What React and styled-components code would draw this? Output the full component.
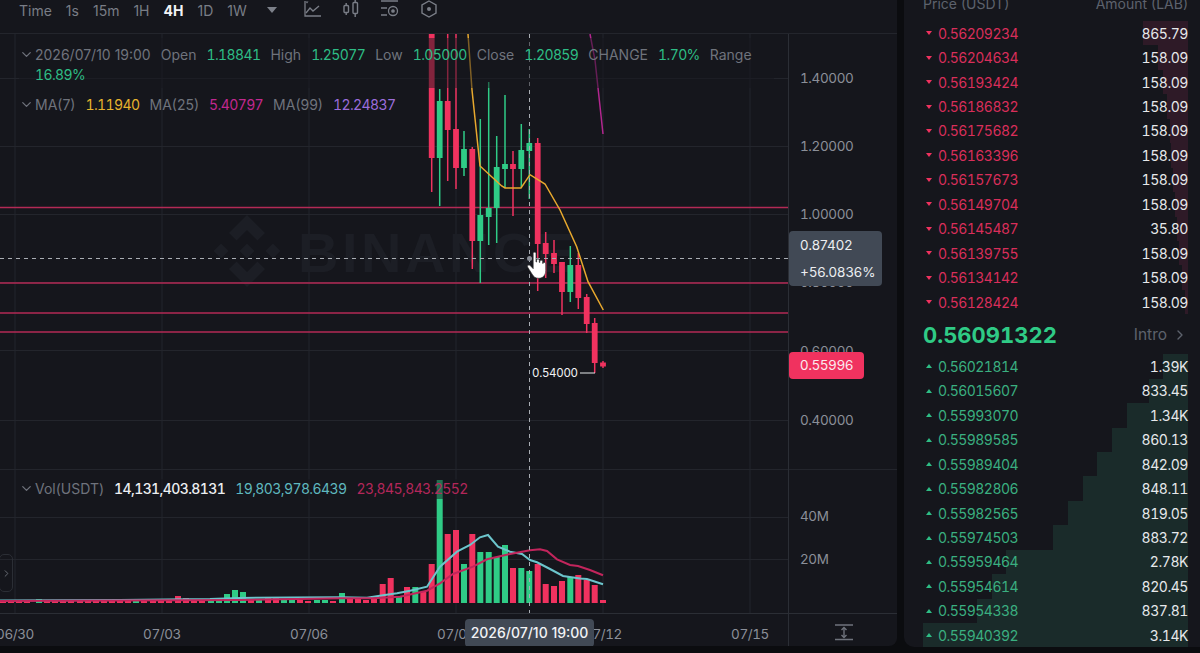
import React from 'react';
import styled, { createGlobalStyle } from 'styled-components';
import { ChevronDown, ChevronRight } from 'lucide-react';

const GREEN = '#2ebd85';
const CANDLE_GREEN = '#2fcb86';
const RED = '#f0325f';
const PANEL = '#15161c';
const GRID = '#23252c';
const AXIS_TEXT = '#8b8f98';

const GlobalStyle = createGlobalStyle`
  html, body { margin: 0; padding: 0; background: #0b0c0f; }
  body { font-family: Inter, "Liberation Sans", sans-serif; }
`;

// [x, bodyTop, bodyBottom, wickTop, wickBottom, up]
const candles = [
  [431.7, 34, 158, 34, 192, 0],
  [439.7, 101, 158, 89, 206, 1],
  [447.7, 101, 130, 34, 181, 0],
  [456, 129, 168, 34, 189, 0],
  [464, 149, 168, 131, 176, 1],
  [472.3, 149, 241, 147, 269, 0],
  [480.3, 215, 241, 119, 283, 1],
  [488.7, 208, 217, 82, 245, 1],
  [496.7, 167, 208, 136, 243, 1],
  [505, 164, 169, 95, 188, 1],
  [513, 164, 169, 151, 216, 0],
  [521.3, 150, 169, 124, 187, 1],
  [529.3, 143, 151, 129, 199, 1],
  [537.7, 143, 244, 138, 291, 0],
  [545.7, 243, 254, 232, 278, 0],
  [554, 253, 264, 240, 273, 0],
  [562, 262, 292, 262, 315, 0],
  [570.3, 265, 292, 246, 302, 1],
  [578.3, 265, 298, 253, 309, 0],
  [586.7, 297, 324, 294, 333, 0],
  [594.7, 323, 363, 318, 373, 0],
  [603, 362.5, 366.5, 361, 368, 0],
];

// volume bars from 07/07 onward: [x, top, up]
const volBars = [
  [342, 593, 1], [350, 599, 0], [358, 599, 0], [366, 600, 0], [374, 599, 0],
  [382.7, 584, 0], [390.7, 578, 0], [399, 597, 1], [407, 587, 0], [415.3, 587, 1],
  [423.3, 592, 0], [431.7, 564, 0], [439.7, 480, 1], [447.7, 534, 0], [456, 530, 0],
  [464, 564, 1], [472.3, 534, 0], [480.3, 552, 1], [488.7, 552, 1], [496.7, 557, 1],
  [505, 545, 1], [513, 568, 0], [521.3, 568, 1], [529.3, 571, 1], [537.7, 564, 0],
  [545.7, 584, 0], [554, 586, 0], [562, 581, 0], [570.3, 577, 1], [578.3, 575, 0],
  [586.7, 580, 0], [594.7, 585, 0], [603, 600, 0],
];

// flat stretch before the pump, heights in px
const flatBars = [
  [3, 0, 2], [11, 0, 2], [19, 0, 3], [27, 0, 2], [39, 1, 4], [47, 0, 2], [55, 0, 3], [63, 0, 2],
  [71, 0, 2], [80, 0, 3], [88, 0, 2], [96, 0, 2], [104, 0, 3], [112, 0, 2], [120, 0, 2],
  [128, 0, 2], [136, 1, 2], [144, 0, 2], [153, 0, 2], [161, 0, 2], [169, 0, 2], [178, 0, 7],
  [186, 0, 5], [194, 0, 4], [202, 0, 3], [211, 1, 3], [219, 1, 4], [227, 1, 9], [235, 1, 13],
  [243, 1, 11], [251, 0, 4], [259, 1, 4], [268, 0, 5], [276, 0, 5], [284, 1, 4], [292, 1, 4],
  [300, 0, 3], [308, 0, 2], [317, 1, 3], [325, 1, 3], [333, 0, 2],
];

const tealLine = 'M0,600.5 L120,600 L210,599 L240,598 L290,597.5 L340,597.3 L367,597.7 L383,595.3 L397,593.3 L410,590.7 L427,586.7 L440,566.7 L457,551.7 L470,545 L480,537.3 L488,535 L498,546.7 L510,551.7 L522,554 L530,560 L537,562.3 L550,569 L563,576 L580,578.5 L587,579 L603,584.3';
const crimsonLine = 'M0,601 L240,600 L340,598.3 L373,598.3 L400,596.7 L427,590.7 L440,583.3 L453,574 L473,566.7 L487,559.3 L510,554 L530,550.3 L540,549.3 L547,551 L557,559.3 L570,565 L578,566 L590,570 L603,575.3';
const ma7Line = 'M468,34 L472,90 L480,166 L501.7,186 L505,188 L521,188 L530,174.7 L545,184 L560,210 L576.7,246.7 L588,281.7 L603.3,310';

const asks = [
  ['0.56209234', '865.79', 45], ['0.56204634', '158.09', 30], ['0.56193424', '158.09', 25],
  ['0.56186832', '158.09', 21], ['0.56175682', '158.09', 18], ['0.56163396', '158.09', 17],
  ['0.56157673', '158.09', 15], ['0.56149704', '158.09', 13], ['0.56145487', '35.80', 11],
  ['0.56139755', '158.09', 9], ['0.56134142', '158.09', 6], ['0.56128424', '158.09', 3],
];
const bids = [
  ['0.56021814', '1.39K', 25], ['0.56015607', '833.45', 39], ['0.55993070', '1.34K', 61],
  ['0.55989585', '860.13', 76], ['0.55989404', '842.09', 91], ['0.55982806', '848.11', 105],
  ['0.55982565', '819.05', 120], ['0.55974503', '883.72', 135], ['0.55959464', '2.78K', 182],
  ['0.55954614', '820.45', 196], ['0.55954338', '837.81', 211], ['0.55940392', '3.14K', 265],
];

const intervals = ['1s', '15m', '1H', '4H', '1D', '1W'];

const Page = styled.div`
  display: flex;
  gap: 7px;
  width: 1200px;
  height: 653px;
  overflow: hidden;
  background: #0b0c0f;
`;

const ChartPanel = styled.section`
  width: 897px;
  height: 646px;
  flex: none;
  display: flex;
  flex-direction: column;
  background: ${PANEL};
  border-bottom-right-radius: 8px;
  overflow: hidden;
`;

const Toolbar = styled.div`
  height: 34px;
  box-sizing: border-box;
  flex: none;
  display: flex;
  align-items: flex-start;
  gap: 14px;
  padding: 2px 0 0 19px;
  border-bottom: 1px solid ${GRID};
  font-size: 14px;
  line-height: 17px;
  color: #797d86;
`;

const Interval = styled.span`
  color: ${p => (p.$active ? '#f2f3f5' : '#797d86')};
  font-weight: ${p => (p.$active ? 700 : 400)};
`;

const Caret = styled.span`
  width: 0;
  height: 0;
  margin: 5px 0 0 6px;
  border-left: 5px solid transparent;
  border-right: 5px solid transparent;
  border-top: 6px solid #7d818a;
`;

const ToolIcons = styled.div`
  display: flex;
  gap: 19px;
  margin: -3px 0 0 11px;
  color: #7a7e87;
`;

const ChartArea = styled.div`
  position: relative;
  flex: 1;
  min-height: 0;
`;

const ChartSvg = styled.svg`
  display: block;
  font-family: Inter, "Liberation Sans", sans-serif;
  font-variant-numeric: tabular-nums;
`;

const Legend = styled.div`
  position: absolute;
  left: 19px;
  top: ${p => p.$top}px;
  width: ${p => p.$width}px;
  display: flex;
  align-items: flex-start;
  gap: 1px;
  padding: ${p => p.$pad};
  font-size: 14px;
  line-height: 20px;
  color: #6f737c;
  background: ${p => (p.$dim ? 'rgba(21, 22, 28, 0.5)' : 'transparent')};
`;

const LegendItems = styled.div`
  flex: 1;
  display: flex;
  flex-wrap: wrap;
  column-gap: 10px;
`;

const Value = styled.span`
  color: ${p => p.$color};
  font-weight: ${p => (p.$bold ? 500 : 400)};
  font-variant-numeric: tabular-nums;
  letter-spacing: -0.6px;
`;

const ExpandHandle = styled.div`
  position: absolute;
  left: -1px;
  top: 520px;
  width: 14px;
  height: 38px;
  box-sizing: border-box;
  display: flex;
  align-items: center;
  justify-content: center;
  border: 1px solid #2b2e35;
  border-radius: 5px;
  color: #6f737c;
`;

const CrossPriceTag = styled.div`
  position: absolute;
  left: 789px;
  top: 197px;
  width: 93px;
  height: 55px;
  box-sizing: border-box;
  display: flex;
  flex-direction: column;
  justify-content: space-between;
  padding: 6px 0 5px 11px;
  border-radius: 4px;
  background: #414955;
  color: #eceef1;
  font-size: 13.5px;
  line-height: 17px;
`;

const LastPriceTag = styled.div`
  position: absolute;
  left: 789px;
  top: 318px;
  width: 75px;
  height: 27px;
  box-sizing: border-box;
  padding-left: 11px;
  border-radius: 4px;
  background: ${RED};
  color: #fbe9ee;
  font-size: 13.5px;
  line-height: 27px;
`;

const TimeTag = styled.div`
  position: absolute;
  left: 465px;
  top: 585px;
  width: 129px;
  height: 28px;
  border-radius: 4px;
  background: #414955;
  color: #f2f3f5;
  font-size: 14px;
  font-weight: 500;
  line-height: 28px;
  text-align: center;
`;

const Cursor = styled.svg`
  position: absolute;
  left: 525px;
  top: 216px;
`;

const Book = styled.section`
  width: 296px;
  height: 647px;
  flex: none;
  box-sizing: border-box;
  padding: 0 12px 0 19px;
  background: ${PANEL};
  border-bottom-left-radius: 10px;
  overflow: hidden;
`;

const BookHeader = styled.div`
  height: 25px;
  margin-top: -4px;
  display: flex;
  justify-content: space-between;
  font-size: 14px;
  line-height: 16px;
  color: #5d626d;
`;

const Row = styled.div`
  position: relative;
  height: 24.45px;
  display: flex;
  align-items: center;
  justify-content: space-between;
  font-size: 14px;
  font-variant-numeric: tabular-nums;
`;

const DepthBar = styled.div`
  position: absolute;
  right: 0;
  top: 0;
  bottom: 0;
  background: ${p => (p.$side === 'ask' ? '#2e1a27' : '#1a2b2a')};
`;

const Price = styled.span`
  position: relative;
  display: flex;
  align-items: center;
  gap: 5px;
  padding-left: 3px;
  letter-spacing: -0.55px;
  color: ${p => (p.$side === 'ask' ? '#d92e5a' : '#3aaf80')};
`;

const Arrow = styled.i`
  width: 0;
  height: 0;
  margin-right: 1px;
  border-left: 3.5px solid transparent;
  border-right: 3.5px solid transparent;
  border-top: ${p => (p.$side === 'ask' ? `4px solid ${RED}` : 'none')};
  border-bottom: ${p => (p.$side === 'bid' ? `4px solid ${GREEN}` : 'none')};
`;

const Amount = styled.span`
  position: relative;
  letter-spacing: -0.45px;
  color: #e6e8ea;
`;

const MidRow = styled.div`
  height: 40px;
  padding-top: 1px;
  box-sizing: border-box;
  display: flex;
  align-items: center;
  justify-content: space-between;
`;

const MidPrice = styled.span`
  font-size: 22px;
  font-weight: 700;
  font-variant-numeric: tabular-nums;
  color: ${CANDLE_GREEN};
`;

const Intro = styled.span`
  display: flex;
  align-items: center;
  gap: 3px;
  font-size: 15.5px;
  color: #5d626d;
`;

const LineChartIcon = () => (
  <svg width="20" height="20" viewBox="0 0 20 20" fill="none" stroke="currentColor" strokeWidth="1.3">
    <path d="M3 2v15h16" />
    <path d="M4 14l4-5 3 3 6-5" />
    <path d="M3.5 2.500h3l-1.500 2z" fill="currentColor" stroke="none" />
  </svg>
);

const CandlesIcon = () => (
  <svg width="20" height="20" viewBox="0 0 20 20" fill="none" stroke="currentColor" strokeWidth="1.4">
    <rect x="3" y="6.500" width="4.500" height="7" rx="1" />
    <path d="M5.200 4v2.500M5.200 13.500V16" />
    <rect x="12" y="3.500" width="4.500" height="11" rx="1" />
    <path d="M14.200 1v2.500M14.200 14.500V18" />
  </svg>
);

const IndicatorIcon = () => (
  <svg width="20" height="20" viewBox="0 0 20 20" fill="none" stroke="currentColor" strokeWidth="1.3">
    <path d="M1 2h17M1 9h6M1 16h6" />
    <circle cx="13" cy="12" r="4.500" />
    <circle cx="13" cy="12" r="1.200" fill="currentColor" />
  </svg>
);

const HexIcon = () => (
  <svg width="20" height="20" viewBox="0 0 20 20" fill="none" stroke="currentColor" strokeWidth="1.4">
    <path d="M10 2l7 4v8l-7 4-7-4V6z" />
    <circle cx="10" cy="10" r="2" fill="currentColor" stroke="none" />
  </svg>
);

const HandCursor = () => (
  <Cursor width="26" height="32" viewBox="0 0 24 30">
    <path
      d="M7.500 3.200c0-1.600 2.600-1.600 2.600 0v8l.6.1V9.600c0-1.500 2.500-1.500 2.500 0v2l.6.1v-1c0-1.500 2.500-1.500 2.500 0v1.800l.5.1c.2-1.300 2.400-1.300 2.400.3v6.600c0 3.800-2.400 7-6.300 7-3.400 0-5-1.400-6.500-4L2.300 16c-.8-1.400 1.100-2.700 2.300-1.500l2.900 3z"
      fill="#fff"
      stroke="#333"
      strokeWidth="0.6"
    />
  </Cursor>
);

const Watermark = () => (
  <g fill="#1c1e25">
    <g transform="translate(247 251) scale(36)">
      <path d="M0-1L.5-.5.29-.29 0-.58-.29-.29-.5-.5z" />
      <path d="M0 1L.5.5.29.29 0 .58-.29.29-.5.5z" />
      <path d="M0-.21L.21 0 0 .21-.21 0z" />
      <path d="M-.72-.21L-.51 0-.72.21-.93 0z" />
      <path d="M.72-.21L.93 0 .72.21.51 0z" />
    </g>
    <text x="298" y="272" fontSize="56" fontWeight="700" fontFamily="Liberation Sans, sans-serif" letterSpacing="3.500">BINANCE</text>
  </g>
);

const priceLabels = [
  ['1.40000', 78], ['1.20000', 146], ['1.00000', 214], ['0.80000', 282], ['0.60000', 351], ['0.40000', 420],
];
const dateLabels = [['06/30', 15], ['07/03', 162], ['07/06', 309], ['07/09', 456], ['07/12', 603], ['07/15', 750]];

const Chart = () => (
  <ChartSvg width="897" height="612" viewBox="0 34 897 612">
    {[15, 162, 309, 456, 603, 750].map(x => (
      <line key={x} x1={x} x2={x} y1="34" y2="613" stroke={GRID} />
    ))}
    {[78, 146, 214, 282, 350, 420, 517, 559].map(y => (
      <line key={y} x1="0" x2="788" y1={y + 0.5} y2={y + 0.5} stroke={GRID} />
    ))}
    <Watermark />
    <line x1="0" x2="897" y1="469.500" y2="469.500" stroke={GRID} />
    <line x1="0" x2="897" y1="613.500" y2="613.500" stroke="#2b2e35" />
    <line x1="788.500" x2="788.500" y1="34" y2="646" stroke="#2b2e35" />

    {[207.5, 283, 313, 332].map(y => (
      <line key={y} x1="0" x2="788" y1={y} y2={y} stroke="#b32a55" strokeWidth="1.5" />
    ))}

    {candles.map(([x, top, bottom, wickTop, wickBottom, up]) => (
      <g key={x} fill={up ? CANDLE_GREEN : RED}>
        <rect x={x - 0.75} y={wickTop} width="1.5" height={wickBottom - wickTop} />
        <rect x={x - 2.9} y={top} width="5.8" height={bottom - top} />
      </g>
    ))}
    <path d={ma7Line} fill="none" stroke="#e8a92e" strokeWidth="1.5" />
    <path d="M590,34 L595,60 L603,134" fill="none" stroke="#b3268f" strokeWidth="1.5" />

    {flatBars.map(([x, up, h]) => (
      <rect key={x} x={x - 3} y={603 - h} width="6" height={h} fill={up ? CANDLE_GREEN : RED} />
    ))}
    {volBars.map(([x, top, up]) => (
      <rect key={x} x={x - 3} y={top} width="6" height={603 - top} fill={up ? CANDLE_GREEN : RED} />
    ))}
    <path d={tealLine} fill="none" stroke="#6cc5cc" strokeWidth="2" />
    <path d={crimsonLine} fill="none" stroke="#c2255c" strokeWidth="2" />

    <line x1="0" x2="788" y1="258.500" y2="258.500" stroke="#a9adb3" strokeDasharray="4 4" />
    <line x1="529.500" x2="529.500" y1="34" y2="613" stroke="#a9adb3" strokeDasharray="4 4" />
    <circle cx="529.500" cy="258.500" r="2.500" fill="#8b8f98" />

    <text x="532" y="377" fontSize="11.500" letterSpacing="-0.3" fill="#f2f3f5">0.54000</text>
    <line x1="580" x2="595" y1="373" y2="373" stroke="#e6e8ea" />

    <g fontSize="13.500" letterSpacing="-0.4" fill={AXIS_TEXT}>
      {priceLabels.map(([label, y]) => (
        <text key={label} x="800" y={y + 5}>{label}</text>
      ))}
      <text x="800" y="521">40M</text>
      <text x="800" y="564">20M</text>
      {dateLabels.map(([label, x]) => (
        <text key={label} x={x} y="639" textAnchor="middle">{label}</text>
      ))}
    </g>

    <g stroke="#6f737c" strokeWidth="1.400" fill="none">
      <path d="M835 625h18M835 639.500h18M844 628v9" />
      <path d="M841.500 630l2.500-2.500 2.500 2.500M841.500 635l2.500 2.500 2.500-2.500" />
    </g>
  </ChartSvg>
);

const BookRow = ({ side, price, amount, depth }) => (
  <Row>
    <DepthBar $side={side} style={{ width: depth }} />
    <Price $side={side}>
      <Arrow $side={side} />
      {price}
    </Price>
    <Amount>{amount}</Amount>
  </Row>
);

export default function App() {
  return (
    <Page>
      <GlobalStyle />
      <ChartPanel>
        <Toolbar>
          <span>Time</span>
          {intervals.map(i => (
            <Interval key={i} $active={i === '4H'}>{i}</Interval>
          ))}
          <Caret />
          <ToolIcons>
            <LineChartIcon />
            <CandlesIcon />
            <IndicatorIcon />
            <HexIcon />
          </ToolIcons>
        </Toolbar>
        <ChartArea>
          <Chart />
          <Legend $top={4} $width={755} $pad="7px 0 3px" $dim>
            <ChevronDown size={15} style={{ marginTop: 2 }} />
            <LegendItems>
              <span>2026/07/10 19:00</span>
              <span>Open</span><Value $color={GREEN}>1.18841</Value>
              <span>High</span><Value $color={GREEN}>1.25077</Value>
              <span>Low</span><Value $color={GREEN}>1.05000</Value>
              <span>Close</span><Value $color={GREEN}>1.20859</Value>
              <span>CHANGE</span><Value $color={GREEN}>1.70%</Value>
              <span>Range</span><Value $color={GREEN}>16.89%</Value>
            </LegendItems>
          </Legend>
          <Legend $top={61} $width={420} $pad="0">
            <ChevronDown size={15} style={{ marginTop: 2 }} />
            <LegendItems>
              <span>MA(7)</span><Value $color="#e6b32e">1.11940</Value>
              <span>MA(25)</span><Value $color="#c1288f">5.40797</Value>
              <span>MA(99)</span><Value $color="#9b6ddb">12.24837</Value>
            </LegendItems>
          </Legend>
          <Legend $top={445} $width={480} $pad="0" $dim>
            <ChevronDown size={15} style={{ marginTop: 2 }} />
            <LegendItems>
              <span>Vol(USDT)</span>
              <Value $color="#eceef1" $bold>14,131,403.8131</Value>
              <Value $color="#5fb8bf">19,803,978.6439</Value>
              <Value $color="#b3275a">23,845,843.2552</Value>
            </LegendItems>
          </Legend>
          <ExpandHandle><ChevronRight size={11} /></ExpandHandle>
          <CrossPriceTag>
            <span>0.87402</span>
            <span>+56.0836%</span>
          </CrossPriceTag>
          <LastPriceTag>0.55996</LastPriceTag>
          <TimeTag>2026/07/10 19:00</TimeTag>
          <HandCursor />
        </ChartArea>
      </ChartPanel>
      <Book>
        <BookHeader>
          <span>Price (USDT)</span>
          <span>Amount (LAB)</span>
        </BookHeader>
        {asks.map(([price, amount, depth]) => (
          <BookRow key={price} side="ask" price={price} amount={amount} depth={depth} />
        ))}
        <MidRow>
          <MidPrice>0.56091322</MidPrice>
          <Intro>Intro <ChevronRight size={16} style={{ marginLeft: 2 }} /></Intro>
        </MidRow>
        {bids.map(([price, amount, depth]) => (
          <BookRow key={price} side="bid" price={price} amount={amount} depth={depth} />
        ))}
      </Book>
    </Page>
  );
}
